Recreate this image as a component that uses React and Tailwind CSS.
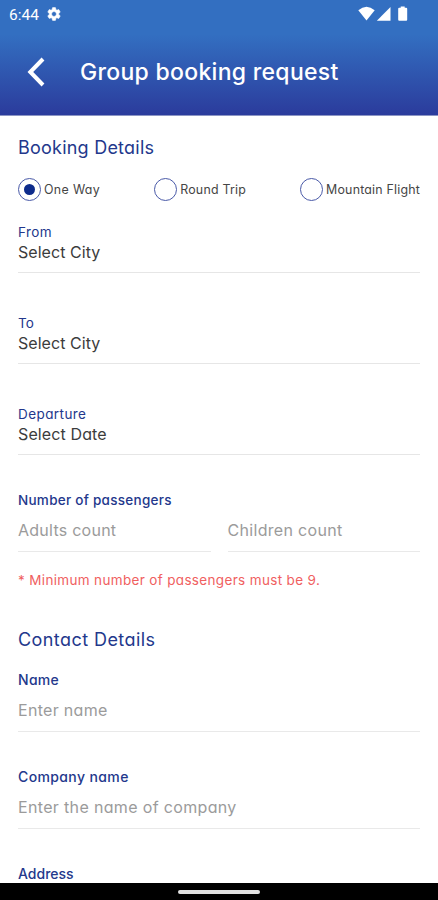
const tripTypes = [
  ['One Way', 'tracking-[0.35px]', true],
  ['Round Trip', 'tracking-[0.2px]', false],
  ['Mountain Flight', 'tracking-[0.2px]', false],
];

const selectFields = [
  ['From', 'Select City', 'tracking-[0.4px]', 'tracking-[0.05px]'],
  ['To', 'Select City', 'tracking-[0.2px]', 'tracking-[0.05px]'],
  ['Departure', 'Select Date', 'tracking-[0.42px]', 'tracking-[0.12px]'],
];

function StatusBar() {
  return (
    <div className="flex h-7 items-center justify-between pl-[9px] pr-[30px] text-white">
      <div className="flex items-center gap-[7px]">
        <span className="font-[Roboto,sans-serif] text-[15.5px] leading-7 pt-px">6:44</span>
        <svg className="size-[16px]" viewBox="0 0 24 24" fill="currentColor">
          <path d="M19.14 12.94c.04-.3.06-.61.06-.94 0-.32-.02-.64-.07-.94l2.03-1.58c.18-.14.23-.41.12-.61l-1.92-3.32c-.12-.22-.37-.29-.59-.22l-2.39.96c-.5-.38-1.03-.7-1.62-.94l-.36-2.54c-.04-.24-.24-.41-.48-.41h-3.84c-.24 0-.43.17-.47.41l-.36 2.54c-.59.24-1.13.57-1.62.94l-2.39-.96c-.22-.08-.47 0-.59.22L2.74 8.87c-.12.21-.08.47.12.61l2.03 1.58c-.05.3-.09.63-.09.94s.02.64.07.94l-2.03 1.58c-.18.14-.23.41-.12.61l1.92 3.32c.12.22.37.29.59.22l2.39-.96c.5.38 1.03.7 1.62.94l.36 2.54c.05.24.24.41.48.41h3.84c.24 0 .44-.17.47-.41l.36-2.54c.59-.24 1.13-.56 1.62-.94l2.39.96c.22.08.47 0 .59-.22l1.92-3.32c.12-.22.07-.47-.12-.61l-2.01-1.58zM12 15.6c-1.98 0-3.6-1.62-3.6-3.6s1.62-3.6 3.6-3.6 3.6 1.62 3.6 3.6-1.62 3.6-3.6 3.6z" stroke="currentColor" strokeWidth="0.8" />
        </svg>
      </div>
      <svg className="h-4 w-[50px]" viewBox="0 0 50 16" fill="currentColor">
        <path d="M0.3 4.2Q8.5 -2.8 16.7 4.2L8.5 14.6Z" />
        <path d="M32.5 1V14.8H18.8Z" />
        <path d="M42.7 0.5h4v1.3h1.5a1 1 0 0 1 1 1V13.8a1 1 0 0 1-1 1h-7a1 1 0 0 1-1-1V2.8a1 1 0 0 1 1-1h1.5z" />
      </svg>
    </div>
  );
}

function Radio({ label, tracking, checked }) {
  return (
    <div className="flex items-center gap-[3px]">
      <span className="flex size-[23px] items-center justify-center rounded-full border-[1.2px] border-[#4a5aa8]">
        {checked && <span className="size-[11px] rounded-full bg-[#0d2b8c]" />}
      </span>
      <span className={`text-[12.4px] leading-4 text-[#454545] ${tracking}`}>{label}</span>
    </div>
  );
}

function TextField({ label, labelTracking, placeholder, tracking }) {
  return (
    <div>
      <p className={`text-[14px] font-medium leading-5 text-[#23388c] ${labelTracking}`}>{label}</p>
      {placeholder && (
        <p className={`mt-[8px] h-[34px] border-b-[1.5px] border-[#e9e9e9] text-[16px] leading-[24px] text-[#9b9b9b] ${tracking}`}>{placeholder}</p>
      )}
    </div>
  );
}

function App() {
  return (
    <div className="flex h-[900px] w-[438px] flex-col overflow-hidden bg-white font-[Inter,sans-serif] [font-feature-settings:'cv11']">
      <header className="h-[116px] shrink-0 border-b border-[#8c95c4] bg-linear-to-b from-[#336fc1] from-30% to-[#2b3b9c]">
        <StatusBar />
        <div className="flex h-[87px] items-center pl-[27px]">
          <svg className="h-[30px] w-[18px] text-white" viewBox="0 0 18 30" fill="none" stroke="currentColor" strokeWidth="4">
            <path d="M16 2L3.3 15L16 28" />
          </svg>
          <h1 className="ml-[35px] text-[23px] font-medium leading-8 tracking-[0.3px] text-white">Group booking request</h1>
        </div>
      </header>

      <main className="flex-1 overflow-hidden px-[18px] pt-[20px]">
        <h2 className="text-[18px] leading-6 tracking-[0.23px] text-[#23388c]">Booking Details</h2>
        <div className="mt-[18px] flex h-[23px] justify-between">
          {tripTypes.map(([label, tracking, checked]) => (
            <Radio key={label} label={label} tracking={tracking} checked={checked} />
          ))}
        </div>

        <div className="mt-[22px] space-y-[41px]">
          {selectFields.map(([label, value, labelTracking, tracking]) => (
            <div key={label} className="h-[50px] border-b-[1.5px] border-[#e6e6e6]">
              <p className={`text-[13.5px] leading-[19px] text-[#23388c] ${labelTracking}`}>{label}</p>
              <p className={`text-[16px] leading-5 text-[#3c3c3c] ${tracking}`}>{value}</p>
            </div>
          ))}
        </div>

        <p className="mt-[35px] text-[13.5px] font-medium leading-5 tracking-[0.27px] text-[#23388c]">Number of passengers</p>
        <div className="mt-[8px] flex gap-[17px]">
          <p className="h-[34px] flex-1 border-b-[1.5px] border-[#e9e9e9] text-[16px] leading-[24px] tracking-[0.25px] text-[#9b9b9b]">Adults count</p>
          <p className="h-[34px] flex-1 border-b-[1.5px] border-[#e9e9e9] text-[16px] leading-[24px] tracking-[0.32px] text-[#9b9b9b]">Children count</p>
        </div>
        <p className="mt-[18px] text-[13.5px] leading-5 tracking-[0.34px] text-[#f0605f]">* Minimum number of passengers must be 9.</p>

        <h2 className="mt-[38px] text-[18px] leading-6 tracking-[0.43px] text-[#23388c]">Contact Details</h2>
        <div className="mt-[18px] space-y-[35px]">
          <TextField label="Name" labelTracking="tracking-[0.3px]" placeholder="Enter name" tracking="tracking-[0.3px]" />
          <TextField label="Company name" labelTracking="tracking-[0.38px]" placeholder="Enter the name of company" tracking="tracking-[0.34px]" />
          <TextField label="Address" labelTracking="tracking-[0px]" />
        </div>
      </main>

      <nav className="flex h-[17px] shrink-0 items-center justify-center bg-black">
        <span className="h-[4px] w-[82px] rounded-full bg-[#e2e2e2]" />
      </nav>
    </div>
  );
}

export default App;
